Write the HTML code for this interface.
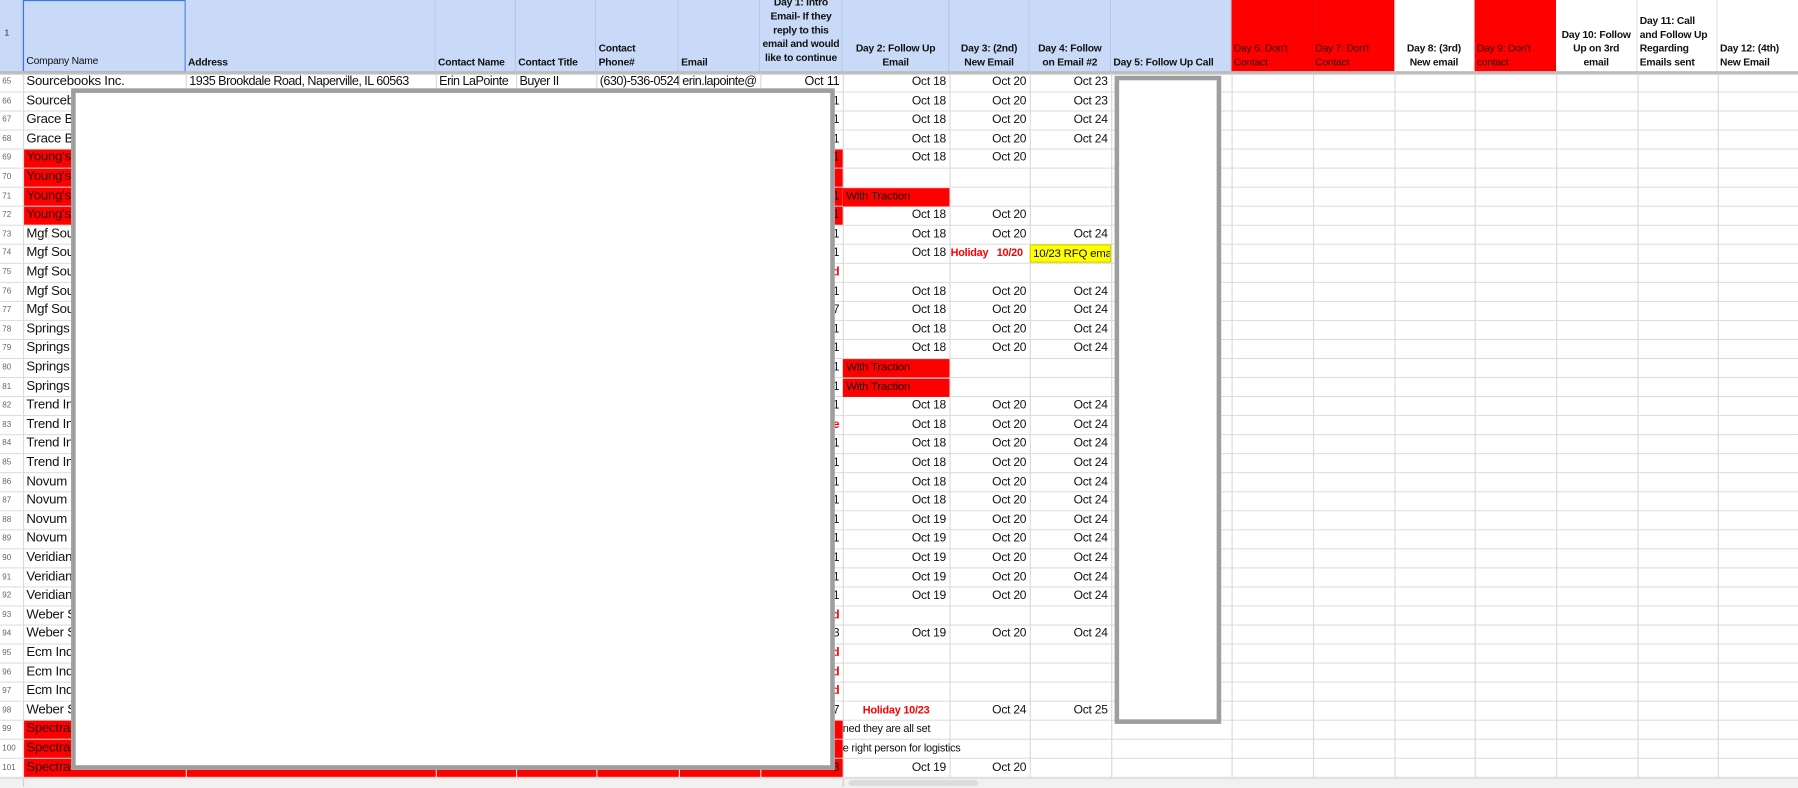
<!DOCTYPE html>
<html><head><meta charset="utf-8">
<style>
html,body{margin:0;padding:0;background:#fff;overflow:hidden;width:1798px;height:787px}
#s{position:absolute;left:0;top:0;width:1568px;height:686px;transform-origin:0 0;transform:scale(1.14668,1.14723);font-family:"Liberation Sans",Arial,sans-serif;background:#fff}
.hd{position:absolute;top:0;height:63px;box-sizing:border-box;border-right:1px solid #b7c6e0;font-size:9px;font-weight:bold;color:#111;display:flex;align-items:flex-end;padding:0 2px 3px;line-height:12px;overflow:hidden;letter-spacing:-0.2px}
.cen{justify-content:center;text-align:center}
.blue{background:#c9daf8}.red{background:#ff0000;border-right-color:#e00}.wh{background:#fff;border-right-color:#e2e2e2}
.vl{position:absolute;top:64px;height:614px;width:1px;background:#dadada}
#hl{position:absolute;left:0;top:64px;width:1568px;height:614px;background:linear-gradient(to bottom,transparent 15.6px,#dadada 15.6px) 0 0/100% 16.6px repeat-y}
.c{position:absolute;top:calc(64px + var(--r)*16.6px);height:15.6px;line-height:15.6px;font-size:10.5px;color:#111;white-space:nowrap;overflow:hidden;box-sizing:border-box;padding:0 3px;letter-spacing:-0.2px}
.n{left:0;width:20px;font-size:7px;color:#666;padding:0 0 0 2px;letter-spacing:0}
.a{left:20px;width:142px;font-size:11.5px}
.g{left:663px;width:72px;text-align:right}
.h{left:735px;width:93px;text-align:right}
.i{left:828px;width:70px;text-align:right}
.j{left:898px;width:71px;text-align:right}
.rb{background:#ff0000;color:#1a0000}
.rt{color:#f00;font-weight:bold}
.box{position:absolute;background:#fff;border:4px solid #9e9e9e;box-sizing:border-box}
.w{font-size:11px;letter-spacing:-0.45px}
</style></head><body>
<div id="s">
<div class="hd blue" style="left:0;width:20px;font-size:7px;font-weight:normal;align-items:center;padding-left:4px">1</div>
<div class="hd blue" style="left:20px;width:142px;border:1px solid #3c78d8;font-weight:normal">Company Name</div>
<div class="hd blue" style="left:162px;width:218px">Address</div>
<div class="hd blue" style="left:380px;width:70px">Contact Name</div>
<div class="hd blue" style="left:450px;width:70px">Contact Title</div>
<div class="hd blue" style="left:520px;width:72px">Contact<br>Phone#</div>
<div class="hd blue" style="left:592px;width:71px">Email</div>
<div class="hd blue cen" style="left:663px;width:72px;align-items:flex-start;padding-top:0"><div style="margin-top:-4px">Day 1: Intro Email- If they reply to this email and would like to continue</div></div>
<div class="hd blue cen" style="left:735px;width:93px">Day 2: Follow Up<br>Email</div>
<div class="hd blue cen" style="left:828px;width:70px">Day 3: (2nd)<br>New Email</div>
<div class="hd blue cen" style="left:898px;width:71px">Day 4: Follow<br>on Email #2</div>
<div class="hd blue" style="left:969px;width:105px">Day 5: Follow Up Call</div>
<div class="hd red" style="left:1074px;width:71px;color:#300;font-weight:normal">Day 6: Don't<br>Contact</div>
<div class="hd red" style="left:1145px;width:71px;color:#300;font-weight:normal">Day 7: Don't<br>Contact</div>
<div class="hd wh cen" style="left:1216px;width:70px">Day 8: (3rd)<br>New email</div>
<div class="hd red" style="left:1286px;width:71px;color:#300;font-weight:normal">Day 9: Don't<br>contact</div>
<div class="hd wh cen" style="left:1357px;width:71px">Day 10: Follow<br>Up on 3rd<br>email</div>
<div class="hd wh" style="left:1428px;width:70px">Day 11: Call<br>and Follow Up<br>Regarding<br>Emails sent</div>
<div class="hd wh" style="left:1498px;width:70px;border-right:none">Day 12: (4th)<br>New Email</div>
<div style="position:absolute;left:0;top:62px;width:1568px;height:3px;background:#bdbdbd"></div>

<div style="position:absolute;left:20px;top:130.4px;width:715px;height:66px;background:#f00"></div>
<div style="position:absolute;left:20px;top:628.4px;width:715px;height:50px;background:#f00"></div>
<div id="hl"></div>
<div class="vl" style="left:20px"></div><div class="vl" style="left:162px"></div><div class="vl" style="left:380px"></div><div class="vl" style="left:450px"></div><div class="vl" style="left:520px"></div><div class="vl" style="left:592px"></div><div class="vl" style="left:663px"></div><div class="vl" style="left:735px"></div><div class="vl" style="left:828px"></div><div class="vl" style="left:898px"></div><div class="vl" style="left:969px"></div><div class="vl" style="left:1074px"></div><div class="vl" style="left:1145px"></div><div class="vl" style="left:1216px"></div><div class="vl" style="left:1286px"></div><div class="vl" style="left:1357px"></div><div class="vl" style="left:1428px"></div><div class="vl" style="left:1498px"></div>

<div class="c n" style="--r:0">65</div><div class="c n" style="--r:1">66</div><div class="c n" style="--r:2">67</div><div class="c n" style="--r:3">68</div><div class="c n" style="--r:4">69</div><div class="c n" style="--r:5">70</div><div class="c n" style="--r:6">71</div><div class="c n" style="--r:7">72</div><div class="c n" style="--r:8">73</div><div class="c n" style="--r:9">74</div><div class="c n" style="--r:10">75</div><div class="c n" style="--r:11">76</div><div class="c n" style="--r:12">77</div><div class="c n" style="--r:13">78</div><div class="c n" style="--r:14">79</div><div class="c n" style="--r:15">80</div><div class="c n" style="--r:16">81</div><div class="c n" style="--r:17">82</div><div class="c n" style="--r:18">83</div><div class="c n" style="--r:19">84</div><div class="c n" style="--r:20">85</div><div class="c n" style="--r:21">86</div><div class="c n" style="--r:22">87</div><div class="c n" style="--r:23">88</div><div class="c n" style="--r:24">89</div><div class="c n" style="--r:25">90</div><div class="c n" style="--r:26">91</div><div class="c n" style="--r:27">92</div><div class="c n" style="--r:28">93</div><div class="c n" style="--r:29">94</div><div class="c n" style="--r:30">95</div><div class="c n" style="--r:31">96</div><div class="c n" style="--r:32">97</div><div class="c n" style="--r:33">98</div><div class="c n" style="--r:34">99</div><div class="c n" style="--r:35">100</div><div class="c n" style="--r:36">101</div>

<div class="c a" style="--r:0">Sourcebooks Inc.</div>
<div class="c a" style="--r:1">Sourcebooks</div><div class="c a" style="--r:2">Grace Bio</div><div class="c a" style="--r:3">Grace Bio</div>
<div class="c a" style="--r:4;color:#300">Young's</div><div class="c a" style="--r:5;color:#300">Young's</div><div class="c a" style="--r:6;color:#300">Young's</div><div class="c a" style="--r:7;color:#300">Young's</div>
<div class="c a" style="--r:8">Mgf Sourcing</div><div class="c a" style="--r:9">Mgf Sourcing</div><div class="c a" style="--r:10">Mgf Sourcing</div><div class="c a" style="--r:11">Mgf Sourcing</div><div class="c a" style="--r:12">Mgf Sourcing</div>
<div class="c a" style="--r:13">Springs</div><div class="c a" style="--r:14">Springs</div><div class="c a" style="--r:15">Springs</div><div class="c a" style="--r:16">Springs</div>
<div class="c a" style="--r:17">Trend Inc</div><div class="c a" style="--r:18">Trend Inc</div><div class="c a" style="--r:19">Trend Inc</div><div class="c a" style="--r:20">Trend Inc</div>
<div class="c a" style="--r:21">Novum</div><div class="c a" style="--r:22">Novum</div><div class="c a" style="--r:23">Novum</div><div class="c a" style="--r:24">Novum</div>
<div class="c a" style="--r:25">Veridian</div><div class="c a" style="--r:26">Veridian</div><div class="c a" style="--r:27">Veridian</div>
<div class="c a" style="--r:28">Weber S</div><div class="c a" style="--r:29">Weber S</div>
<div class="c a" style="--r:30">Ecm Ind</div><div class="c a" style="--r:31">Ecm Ind</div><div class="c a" style="--r:32">Ecm Ind</div>
<div class="c a" style="--r:33">Weber S</div>
<div class="c a" style="--r:34;color:#300">Spectra</div><div class="c a" style="--r:35;color:#300">Spectra</div><div class="c a" style="--r:36;color:#300">Spectra</div>

<div class="c w" style="--r:0;left:162px;width:218px">1935 Brookdale Road, Naperville, IL 60563</div>
<div class="c w" style="--r:0;left:380px;width:70px">Erin LaPointe</div>
<div class="c w" style="--r:0;left:450px;width:70px">Buyer II</div>
<div class="c w" style="--r:0;left:520px;width:72px">(630)-536-0524</div>
<div class="c w" style="--r:0;left:592px;width:71px">erin.lapointe@</div>
<div class="c g" style="--r:0;font-size:11px">Oct 11</div>

<div class="c g" style="--r:1">1</div><div class="c g" style="--r:2">1</div><div class="c g" style="--r:3">1</div><div class="c g" style="--r:4">1</div><div class="c g" style="--r:6">1</div><div class="c g" style="--r:7">1</div><div class="c g" style="--r:8">1</div><div class="c g" style="--r:9">1</div><div class="c g rt" style="--r:10">d</div><div class="c g" style="--r:11">1</div><div class="c g" style="--r:12">7</div><div class="c g" style="--r:13">1</div><div class="c g" style="--r:14">1</div><div class="c g" style="--r:15">1</div><div class="c g" style="--r:16">1</div><div class="c g" style="--r:17">1</div><div class="c g rt" style="--r:18">e</div><div class="c g" style="--r:19">1</div><div class="c g" style="--r:20">1</div><div class="c g" style="--r:21">1</div><div class="c g" style="--r:22">1</div><div class="c g" style="--r:23">1</div><div class="c g" style="--r:24">1</div><div class="c g" style="--r:25">1</div><div class="c g" style="--r:26">1</div><div class="c g" style="--r:27">1</div><div class="c g rt" style="--r:28">d</div><div class="c g" style="--r:29">3</div><div class="c g rt" style="--r:30">d</div><div class="c g rt" style="--r:31">d</div><div class="c g rt" style="--r:32">d</div><div class="c g" style="--r:33">7</div><div class="c g" style="--r:36">3</div>

<div class="c h" style="--r:0">Oct 18</div><div class="c i" style="--r:0">Oct 20</div><div class="c j" style="--r:0">Oct 23</div>
<div class="c h" style="--r:1">Oct 18</div><div class="c i" style="--r:1">Oct 20</div><div class="c j" style="--r:1">Oct 23</div>
<div class="c h" style="--r:2">Oct 18</div><div class="c i" style="--r:2">Oct 20</div><div class="c j" style="--r:2">Oct 24</div>
<div class="c h" style="--r:3">Oct 18</div><div class="c i" style="--r:3">Oct 20</div><div class="c j" style="--r:3">Oct 24</div>
<div class="c h" style="--r:4">Oct 18</div><div class="c i" style="--r:4">Oct 20</div>
<div class="c h rb" style="--r:6;text-align:left;height:16px;font-size:10px">With Traction</div>
<div class="c h" style="--r:7">Oct 18</div><div class="c i" style="--r:7">Oct 20</div>
<div class="c h" style="--r:8">Oct 18</div><div class="c i" style="--r:8">Oct 20</div><div class="c j" style="--r:8">Oct 24</div>
<div class="c h" style="--r:9">Oct 18</div><div class="c i rt" style="--r:9;text-align:left;font-size:9.5px;padding-left:1px">Holiday&nbsp;&nbsp;&nbsp;10/20</div><div class="c j" style="--r:9;background:#ff0;text-align:left;border:1px solid #d4d400;font-size:10px;padding-left:2px">10/23 RFQ emai</div>
<div class="c h" style="--r:11">Oct 18</div><div class="c i" style="--r:11">Oct 20</div><div class="c j" style="--r:11">Oct 24</div>
<div class="c h" style="--r:12">Oct 18</div><div class="c i" style="--r:12">Oct 20</div><div class="c j" style="--r:12">Oct 24</div>
<div class="c h" style="--r:13">Oct 18</div><div class="c i" style="--r:13">Oct 20</div><div class="c j" style="--r:13">Oct 24</div>
<div class="c h" style="--r:14">Oct 18</div><div class="c i" style="--r:14">Oct 20</div><div class="c j" style="--r:14">Oct 24</div>
<div class="c h rb" style="--r:15;text-align:left;height:16px;font-size:10px">With Traction</div>
<div class="c h rb" style="--r:16;text-align:left;height:16px;font-size:10px">With Traction</div>
<div class="c h" style="--r:17">Oct 18</div><div class="c i" style="--r:17">Oct 20</div><div class="c j" style="--r:17">Oct 24</div>
<div class="c h" style="--r:18">Oct 18</div><div class="c i" style="--r:18">Oct 20</div><div class="c j" style="--r:18">Oct 24</div>
<div class="c h" style="--r:19">Oct 18</div><div class="c i" style="--r:19">Oct 20</div><div class="c j" style="--r:19">Oct 24</div>
<div class="c h" style="--r:20">Oct 18</div><div class="c i" style="--r:20">Oct 20</div><div class="c j" style="--r:20">Oct 24</div>
<div class="c h" style="--r:21">Oct 18</div><div class="c i" style="--r:21">Oct 20</div><div class="c j" style="--r:21">Oct 24</div>
<div class="c h" style="--r:22">Oct 18</div><div class="c i" style="--r:22">Oct 20</div><div class="c j" style="--r:22">Oct 24</div>
<div class="c h" style="--r:23">Oct 19</div><div class="c i" style="--r:23">Oct 20</div><div class="c j" style="--r:23">Oct 24</div>
<div class="c h" style="--r:24">Oct 19</div><div class="c i" style="--r:24">Oct 20</div><div class="c j" style="--r:24">Oct 24</div>
<div class="c h" style="--r:25">Oct 19</div><div class="c i" style="--r:25">Oct 20</div><div class="c j" style="--r:25">Oct 24</div>
<div class="c h" style="--r:26">Oct 19</div><div class="c i" style="--r:26">Oct 20</div><div class="c j" style="--r:26">Oct 24</div>
<div class="c h" style="--r:27">Oct 19</div><div class="c i" style="--r:27">Oct 20</div><div class="c j" style="--r:27">Oct 24</div>
<div class="c h" style="--r:29">Oct 19</div><div class="c i" style="--r:29">Oct 20</div><div class="c j" style="--r:29">Oct 24</div>
<div class="c h rt" style="--r:33;text-align:center;font-size:9.5px">Holiday 10/23</div><div class="c i" style="--r:33">Oct 24</div><div class="c j" style="--r:33">Oct 25</div>
<div class="c" style="--r:34;left:735px;width:300px;font-size:9.5px;padding:0">ned they are all set</div>
<div class="c" style="--r:35;left:735px;width:300px;font-size:9.5px;padding:0">e right person for logistics</div>
<div class="c h" style="--r:36">Oct 19</div><div class="c i" style="--r:36">Oct 20</div>

<div class="box" style="left:62px;top:77px;width:666px;height:594px"></div>
<div class="box" style="left:972px;top:66px;width:93px;height:565px"></div>

<div style="position:absolute;left:0;top:678px;width:1568px;height:8px;background:#f1f1f1;border-top:1px solid #e0e0e0"></div>
<div style="position:absolute;left:20px;top:679px;width:1px;height:7px;background:#d0d0d0"></div>
<div style="position:absolute;left:735px;top:679px;width:1px;height:7px;background:#d0d0d0"></div>
<div style="position:absolute;left:740px;top:679.5px;width:113px;height:5px;background:#dadce0;border-radius:3px"></div>
</div>
</body></html>
